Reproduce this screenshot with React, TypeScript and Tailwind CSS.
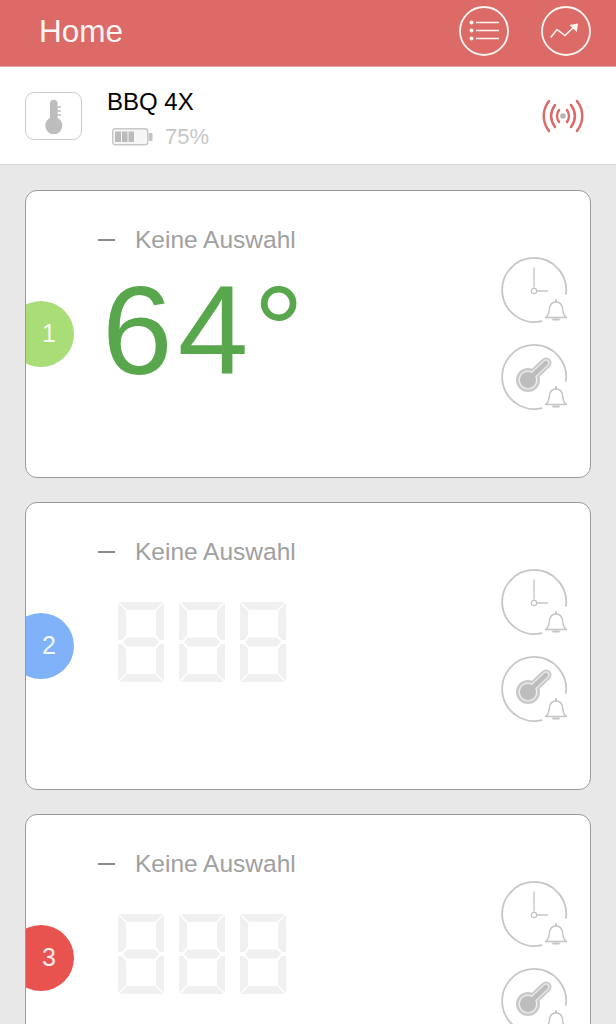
const sans = "font-['Liberation_Sans',Arial,sans-serif]";

type ChannelProps = {
  num: number;
  color: string;
  temp?: string;
};

const Segments = () => (
  <svg width="46" height="80" viewBox="0 0 46 80" fill="#f0f0f0">
    <polygon points="1,0 45,0 37,8 9,8" />
    <polygon points="0,1 8,9 8,33 4,38 0,38" />
    <polygon points="46,1 38,9 38,33 42,38 46,38" />
    <polygon points="5,40 9,35.5 37,35.5 41,40 37,44.5 9,44.5" />
    <polygon points="0,42 4,42 8,47 8,71 0,79" />
    <polygon points="46,42 42,42 38,47 38,71 46,79" />
    <polygon points="9,72 37,72 45,80 1,80" />
  </svg>
);

const Bell = () => (
  <g fill="none" stroke="#c4c4c4" strokeWidth="1.5" strokeLinejoin="round" strokeLinecap="round">
    <path d="M45.5 61.5c3-1.800 3.500-4.500 3.800-8 .4-4.500 2.500-7.500 6.700-7.500s6.300 3 6.700 7.500c.3 3.500 .8 6.200 3.800 8z" />
    <path d="M56 44v2" strokeWidth="1.800" />
    <path d="M53 63.500h6" strokeWidth="1.800" />
  </g>
);

const Ring = () => (
  <path d="M41.500 65.100A32 32 0 1 1 65.900 38" fill="none" stroke="#c6c6c6" strokeWidth="1.800" strokeLinecap="round" />
);

const ClockAlarm = () => (
  <svg width="68" height="68" viewBox="0 0 68 68">
    <Ring />
    <path d="M34 11.500v20M37 35h11" fill="none" stroke="#c4c4c4" strokeWidth="1.300" />
    <circle cx="34" cy="35" r="2.700" fill="none" stroke="#c4c4c4" strokeWidth="1.200" />
    <Bell />
  </svg>
);

const TempAlarm = () => (
  <svg width="68" height="68" viewBox="0 0 68 68">
    <Ring />
    <path d="M28 37L46 20" stroke="#cacaca" strokeWidth="11" strokeLinecap="round" />
    <circle cx="28" cy="37" r="12" fill="#cacaca" />
    <path d="M28 37L46 20" stroke="#ececec" strokeWidth="7" strokeLinecap="round" />
    <circle cx="28" cy="37" r="9.500" fill="#ececec" />
    <path d="M28 37L46 20" stroke="#bdbdbd" strokeWidth="4.500" strokeLinecap="round" />
    <circle cx="28" cy="37" r="8" fill="#bdbdbd" />
    <Bell />
  </svg>
);

const Channel = ({ num, color, temp }: ChannelProps) => {
  return (
    <div className="relative flex h-[288px] shrink-0 justify-between overflow-hidden rounded-[12px] border border-[#9a9a9a] bg-white">
      <div
        className={`absolute left-[-18px] top-[110px] flex h-[66px] w-[66px] items-center justify-center rounded-full pl-[16px] text-[25px] text-white/90 ${sans}`}
        style={{ backgroundColor: color }}
      >
        {num}
      </div>
      <div className="flex flex-col pl-[72px] pt-[35px]">
        <div className={`flex h-[28px] items-center text-[24.500px] leading-none text-[#a0a0a0] ${sans}`}>
          <span className="mr-5 h-[2px] w-[17px] bg-[#8a8a8a]"></span>
          Keine Auswahl
        </div>
        {temp ? (
          <div className={`ml-[4px] mt-[26px] text-[127px] leading-[100px] tracking-[5px] text-[#59a74c] ${sans}`}>
            {temp}
          </div>
        ) : (
          <div className="ml-[20px] mt-[36px] flex gap-[15px]">
            <Segments />
            <Segments />
            <Segments />
          </div>
        )}
      </div>
      <div className="flex flex-col gap-[19px] pr-[22px] pt-[65px]">
        <ClockAlarm />
        <TempAlarm />
      </div>
    </div>
  );
};

export default function App() {
  return (
    <div className={`flex h-[1024px] w-[616px] flex-col overflow-hidden bg-[#e8e8e8] ${sans}`}>
      <header className="flex h-[67px] shrink-0 items-center justify-between border-b border-[#e6a3a1] bg-[#dc6a66] pb-[4px] pl-[39px] pr-[25px]">
        <span className="mt-[2px] text-[31.500px] leading-none text-white/95">Home</span>
        <div className="flex gap-[32px]">
          <svg width="50" height="50" viewBox="0 0 50 50" fill="none" stroke="#fff6f2" strokeWidth="1.800">
            <circle cx="25" cy="25" r="24" />
            <path d="M17 16.500h23M17 24.500h23M17 32.500h23" strokeWidth="1.500" />
            <circle cx="12.500" cy="16.500" r="2" fill="#fff6f2" stroke="none" />
            <circle cx="12.500" cy="24.500" r="2" fill="#fff6f2" stroke="none" />
            <circle cx="12.500" cy="32.500" r="2" fill="#fff6f2" stroke="none" />
          </svg>
          <svg width="50" height="50" viewBox="0 0 50 50" fill="none" stroke="#fff6f2" strokeWidth="1.800">
            <circle cx="25" cy="25" r="24" />
            <path d="M9.700 31.500l6.300-8 8 6 11-10.500" strokeWidth="1.500" />
            <path d="M28.500 19l8.500-1.500-1.200 8.500z" fill="#fff6f2" stroke="none" />
          </svg>
        </div>
      </header>

      <div className="flex h-[98px] shrink-0 items-center border-b border-[#d4d4d4] bg-white pl-[25px] pr-[32px]">
        <div className="flex h-[48px] w-[57px] items-center justify-center rounded-[9px] border border-[#cccccc]">
          <svg width="24" height="40" viewBox="0 0 24 40" fill="#bdbdbd">
            <path d="M8 7.500a3.800 3.800 0 0 1 7.600 0v14.500a8.500 8.500 0 1 1-7.600 0z" />
            <path d="M15 11h4M15 15h4M15 19h4" stroke="#bdbdbd" strokeWidth="1.300" />
          </svg>
        </div>
        <div className="ml-[25px] flex flex-col pt-[5px]">
          <span className="text-[24px] leading-[28px] text-black">BBQ 4X</span>
          <div className="mt-[10px] flex items-center pl-[5px]">
            <svg width="41" height="18" viewBox="0 0 41 18">
              <rect x="0.700" y="0.700" width="35" height="16" rx="2.500" fill="#f6f6f6" stroke="#c8c8c8" strokeWidth="1.400" />
              <rect x="3" y="3.500" width="6" height="10.500" fill="#bcbcbc" />
              <rect x="10" y="3.500" width="5.500" height="10.500" fill="#bcbcbc" />
              <rect x="16.500" y="3.500" width="5.500" height="10.500" fill="#bcbcbc" />
              <rect x="36.500" y="5" width="4" height="8" rx="1" fill="#c4c4c4" />
            </svg>
            <span className="ml-[12px] text-[22px] leading-none text-[#c6c6c6]">75%</span>
          </div>
        </div>
        <svg className="ml-auto" width="42" height="36" viewBox="0 0 42 36" fill="none" stroke="#dc6a66" strokeWidth="2.500" strokeLinecap="round">
          <path d="M7 3C0 12 0 24 7 33" />
          <path d="M13 7C8 14 8 22 13 29" />
          <path d="M17 12C14.500 15.500 14.500 20.500 17 24" />
          <path d="M35 3C42 12 42 24 35 33" />
          <path d="M29 7C34 14 34 22 29 29" />
          <path d="M25 12C27.500 15.500 27.500 20.500 25 24" />
          <circle cx="21" cy="18" r="2.800" fill="#b5b5b5" stroke="none" />
        </svg>
      </div>

      <div className="flex flex-col gap-[24px] pl-[25px] pr-[25px] pt-[25px]">
        <Channel num={1} color="#a9dd77" temp="64°" />
        <Channel num={2} color="#7fb2f8" />
        <Channel num={3} color="#e9534f" />
      </div>
    </div>
  );
}
